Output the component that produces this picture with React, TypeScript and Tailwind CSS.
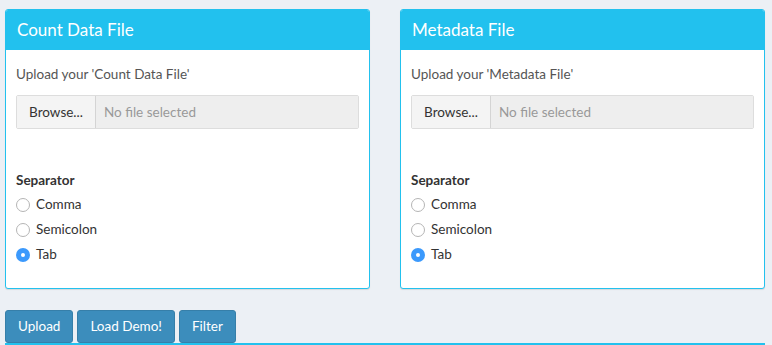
import React from "react";

function Radio({ checked }: { checked?: boolean }) {
  return checked ? (
    <span className="flex h-[14px] w-[14px] items-center justify-center rounded-full bg-[#3b99fc]">
      <span className="h-[4px] w-[4px] rounded-full bg-white" />
    </span>
  ) : (
    <span className="h-[14px] w-[14px] rounded-full border border-[#b5b5b5] bg-white" />
  );
}

function Card({ title, label }: { title: string; label: string }) {
  return (
    <div className="flex h-[280px] w-[365px] flex-col overflow-hidden rounded-[3px] border border-[#22c1ee] bg-white shadow-[0_1px_1px_rgba(0,0,0,0.1)]">
      <div className="flex h-[40px] items-center bg-[#22c1ee] px-[11px] text-[17px] text-white">
        {title}
      </div>
      <div className="flex flex-col px-[10px] pt-[14px]">
        <div className="text-[13.5px] leading-[20px] text-[#555]">Upload your '{label}'</div>
        <div className="mt-[11px] flex h-[34px] rounded-[2px] border border-[#ddd]">
          <div className="flex w-[79px] items-center justify-center border-r border-[#d4d4d4] bg-[#f4f4f4] text-[13.5px] text-[#333]">
            Browse...
          </div>
          <div className="flex flex-1 items-center bg-[#eee] px-[8px] text-[13.5px] text-[#999]">
            No file selected
          </div>
        </div>
        <div className="mt-[41px] text-[13.5px] font-bold leading-[20px] text-[#333]">Separator</div>
        <div className="mt-[2px] flex flex-col">
          {["Comma", "Semicolon", "Tab"].map((o, i) => (
            <div key={o} className="flex h-[25px] items-center gap-[6px] text-[13.5px] text-[#333]">
              <Radio checked={i === 2} />
              <span>{o}</span>
            </div>
          ))}
        </div>
      </div>
    </div>
  );
}

export default function App() {
  return (
    <div
      className="h-[345px] w-[772px] overflow-hidden bg-[#ecf0f5] px-[5px] pt-[9px]"
      style={{ fontFamily: "Lato, 'Liberation Sans', sans-serif" }}
    >
      <div className="flex gap-[30px]">
        <Card title="Count Data File" label="Count Data File" />
        <Card title="Metadata File" label="Metadata File" />
      </div>
      <div className="mt-[21px] flex gap-[4px]">
        {["Upload", "Load Demo!", "Filter"].map((b) => (
          <button
            key={b}
            className="h-[33px] rounded-[3px] border border-[#367fa9] bg-[#3c8dbc] px-[12px] text-[13.5px] text-white"
          >
            {b}
          </button>
        ))}
      </div>
      <div className="mr-[2px] h-[3px] border-t-[2px] border-[#22c1ee]" />
    </div>
  );
}
